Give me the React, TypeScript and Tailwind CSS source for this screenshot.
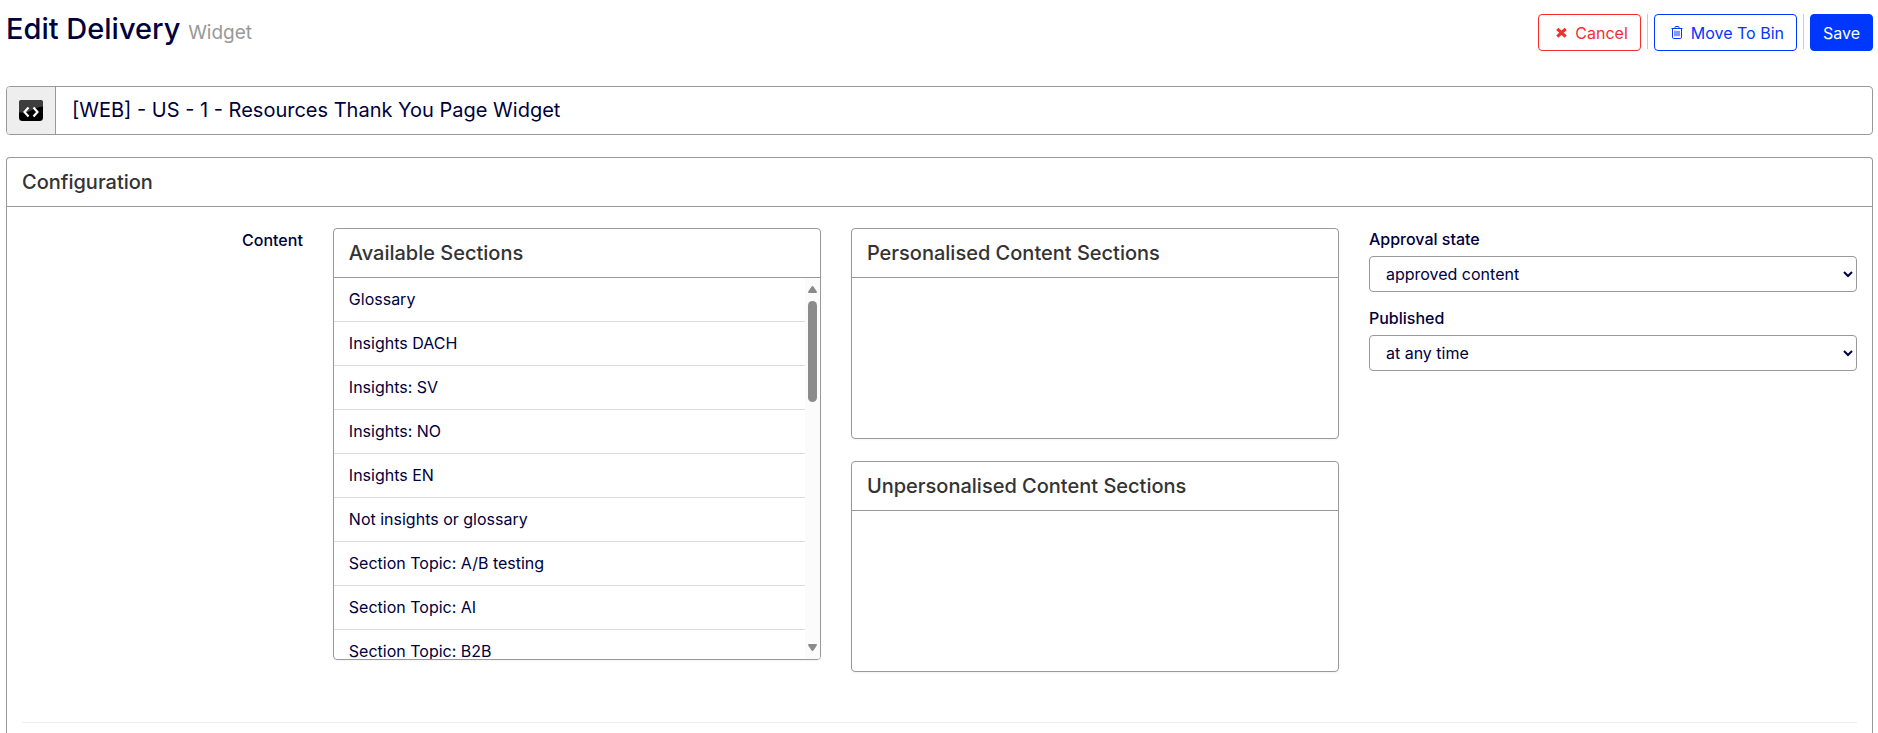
import React, { useState } from "react";

const sections = [
  "Glossary",
  "Insights DACH",
  "Insights: SV",
  "Insights: NO",
  "Insights EN",
  "Not insights or glossary",
  "Section Topic: A/B testing",
  "Section Topic: AI",
  "Section Topic: B2B",
];

function CrossIcon() {
  return (
    <svg width="11" height="11" viewBox="0 0 11 11" fill="none" stroke="currentColor" strokeWidth="3.2">
      <path d="M1.3 1.8l8.4 7.8M9.7 1.8l-8.4 7.8" />
    </svg>
  );
}

function BinIcon() {
  return (
    <svg width="12" height="13" viewBox="0 0 12 13" fill="none" stroke="currentColor">
      <path d="M0.5 2.5h11M4 2.5V1.3q0-.8.8-.8h2.4q.8 0 .8.8v1.2M1.5 2.5v8.6q0 1.4 1.2 1.4h6.6q1.2 0 1.2-1.4V2.5M4 4.8v5.4M6 4.8v5.4M8 4.8v5.4" />
    </svg>
  );
}

function WidgetIcon() {
  return (
    <svg width="24" height="21" viewBox="0 0 24 21">
      <rect width="24" height="21" rx="3.5" fill="#000" />
      <path d="M2 0h20q2 0 2 2v4.5Q17 7 13 10T0 12.5V2q0-2 2-2z" fill="#3d3d3d" />
      <path d="M9.5 7.5L5.5 12l4 4.5M14.5 7.5l4 4.5-4 4.5" fill="none" stroke="#fff" strokeWidth="2.2" />
    </svg>
  );
}

function Panel({ title, children }: { title: string; children?: React.ReactNode }) {
  return (
    <section className="overflow-hidden rounded border border-[#999] shadow-xs">
      <h3 className="border-b border-[#999] px-[15px] py-3 text-xl leading-6 font-medium text-[#333]">
        {title}
      </h3>
      {children}
    </section>
  );
}

function SelectField({ id, label, options }: { id: string; label: string; options: string[] }) {
  const [value, setValue] = useState<string>(options[0]);
  return (
    <div className="mb-[15px]">
      <label htmlFor={id} className="mb-[5px] block leading-[23px] font-medium">
        {label}
      </label>
      <select
        id={id}
        value={value}
        onChange={(e) => setValue(e.target.value)}
        className="h-9 w-full rounded border border-[#999] bg-white pl-3"
      >
        {options.map((option) => (
          <option key={option}>{option}</option>
        ))}
      </select>
    </div>
  );
}

export default function App() {
  const [name, setName] = useState<string>("[WEB] - US - 1 - Resources Thank You Page Widget");

  return (
    <div className="bg-white pr-[5px] pl-[6px] font-['Inter',sans-serif] text-base text-[#00003c]">
      <header className="flex items-start justify-between pt-[14px]">
        <h1 className="text-[29px] leading-[30px] font-medium">
          Edit Delivery <small className="text-[19px] font-normal text-[#999]">Widget</small>
        </h1>
        <div className="flex items-start">
          <button
            type="button"
            className="flex h-[37px] items-center gap-2 rounded border border-[#f52d2d] pr-3 pl-[17px] text-[#f52d2d]"
          >
            <CrossIcon />
            Cancel
          </button>
          <div className="mx-[6px] h-[35px] w-px bg-[#ccc]" />
          <button
            type="button"
            className="flex h-[37px] items-center gap-2 rounded border border-[#0037ff] pr-3 pl-4 text-[#0037ff]"
          >
            <BinIcon />
            Move To Bin
          </button>
          <div className="mx-[6px] h-[35px] w-px bg-[#ccc]" />
          <button
            type="submit"
            className="h-[37px] rounded border border-[#0037ff] bg-[#0037ff] px-3 text-white"
          >
            Save
          </button>
        </div>
      </header>

      <div className="mt-[35px] flex h-[49px] overflow-hidden rounded border border-[#999]">
        <span className="flex w-[49px] items-center justify-center border-r border-[#999] bg-[#eee]">
          <WidgetIcon />
        </span>
        <input
          type="text"
          aria-label="Delivery name"
          value={name}
          onChange={(e) => setName(e.target.value)}
          className="min-w-0 flex-1 px-4 pb-px text-xl outline-none"
        />
      </div>

      <section className="mt-[22px] rounded-t border border-b-0 border-[#999] pb-[10px]">
        <h2 className="border-b border-[#999] px-[15px] py-3 text-xl leading-6 font-medium text-[#333]">
          Configuration
        </h2>
        <div className="grid grid-cols-[2fr_10fr] pt-[21px]">
          <div className="px-[15px] text-right leading-6 font-medium">Content</div>
          <div className="grid grid-cols-3 items-start gap-[30px] px-[15px]">
            <Panel title="Available Sections">
              <div className="flex h-[381px]">
                <ul className="min-w-0 flex-1 overflow-hidden">
                  {sections.map((section) => (
                    <li key={section} className="border-b border-[#ddd] px-[15px] py-[10px] leading-[23px]">
                      {section}
                    </li>
                  ))}
                </ul>
                <div className="flex w-[15px] flex-col items-center bg-[#fbfbfb] py-2 text-[#8b8b8b]">
                  <svg width="9" height="7" viewBox="0 0 9 7" fill="currentColor">
                    <path d="M4.5 0q.7 0 1.1.7L8.8 5.6Q9.2 7 8.2 7H.8Q-.2 7 .2 5.6L3.4.7Q3.8 0 4.5 0z" />
                  </svg>
                  <div className="mt-2 h-[101px] w-[9px] rounded-full bg-[#8b8b8b]" />
                  <svg className="mt-auto" width="9" height="7" viewBox="0 0 9 7" fill="currentColor">
                    <path d="M4.5 7q.7 0 1.1-.7L8.8 1.4Q9.2 0 8.2 0H.8Q-.2 0 .2 1.4L3.4 6.3Q3.8 7 4.5 7z" />
                  </svg>
                </div>
              </div>
            </Panel>
            <div className="flex flex-col gap-[22px]">
              <Panel title="Personalised Content Sections">
                <div className="h-[160px]" />
              </Panel>
              <Panel title="Unpersonalised Content Sections">
                <div className="h-[160px]" />
              </Panel>
            </div>
            <div>
              <SelectField
                id="approval"
                label="Approval state"
                options={["approved content", "unapproved content", "any content"]}
              />
              <SelectField
                id="published"
                label="Published"
                options={["at any time", "in the last week", "in the last month"]}
              />
            </div>
          </div>
        </div>
        <hr className="mx-[15px] mt-[50px] border-[#eee]" />
      </section>
    </div>
  );
}
